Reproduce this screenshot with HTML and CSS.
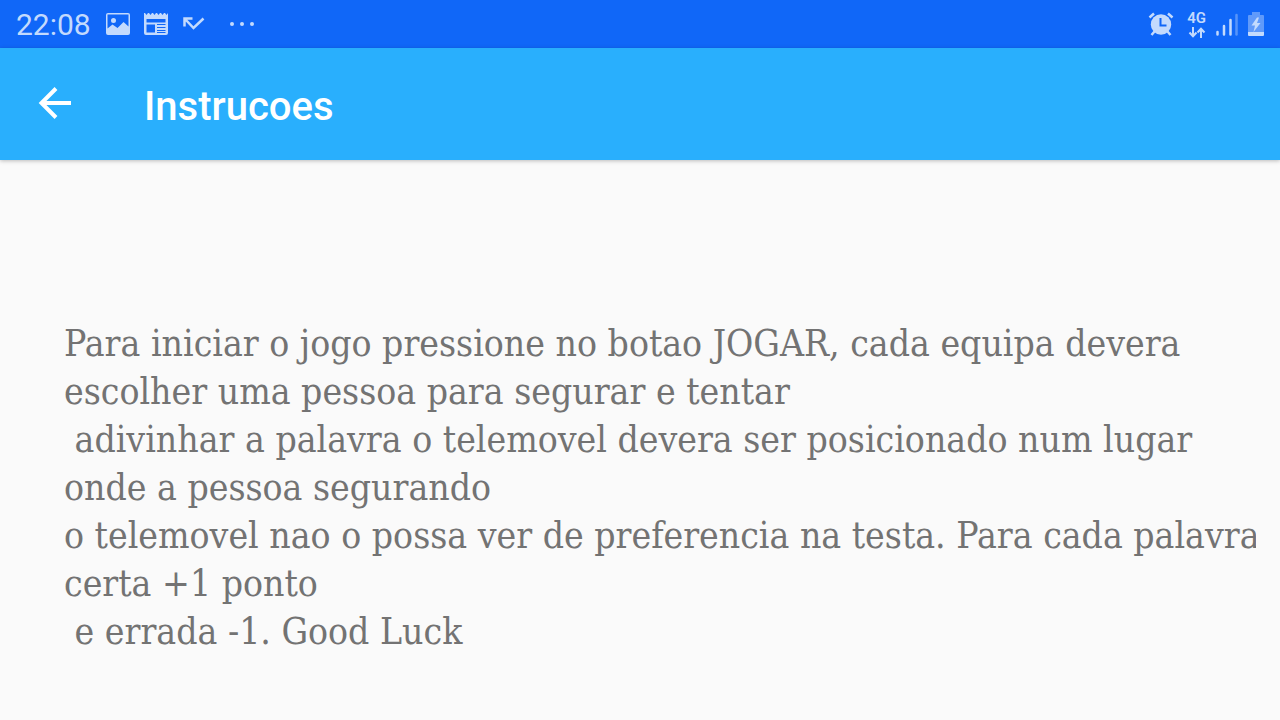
FILE: index.html
```html
<!DOCTYPE html>
<html lang="pt">
<head>
<meta charset="utf-8">
<meta name="viewport" content="width=device-width, initial-scale=1">
<title>Instrucoes</title>
<link rel="stylesheet" href="styles.css">
</head>
<body>
<div class="status-bar">
  <div class="status-group">
    <time class="clock">22:08</time>
    <svg class="icon-picture" width="24" height="22" viewBox="0 0 24 22" fill="currentColor" aria-hidden="true">
      <path fill-rule="evenodd" d="M2 0h20a2 2 0 0 1 2 2v18a2 2 0 0 1-2 2H2a2 2 0 0 1-2-2V2a2 2 0 0 1 2-2zM1.500 1.500v14l5-4 5 3.500 6-6 5 4.500v-12zM7.500 5a2.500 2.500 0 1 1 0 5 2.500 2.500 0 0 1 0-5z"/>
    </svg>
    <svg class="icon-news" width="24" height="22" viewBox="0 0 24 22" aria-hidden="true">
      <path fill="currentColor" fill-rule="evenodd" d="M0 0h1l1.500 2L4 0h1l1.500 2L8 0h1l1.500 2L12 0h1l1.500 2L16 0h1l1.500 2L20 0h1l1.500 2L24 0v20a2 2 0 0 1-2 2H2a2 2 0 0 1-2-2zM2.500 6v3.500h19V6zM2.500 11.500v8h8.500v-8zM13 11v1h8.500v-1zM13 14v1h8.500v-1zM13 17v1h8.500v-1zM13 19v1h8.500v-1z"/>
    </svg>
    <svg class="icon-missed" width="22" height="14" viewBox="0 0 22 14" fill="none" stroke="currentColor" stroke-width="2.500" aria-hidden="true">
      <path d="M1.500 9.500V1.500H9.500M2 2l8.500 9L20.500 1.500"/>
    </svg>
    <svg class="icon-more" width="24" height="4" viewBox="0 0 24 4" fill="currentColor" aria-hidden="true">
      <circle cx="2" cy="2" r="2"/><circle cx="12" cy="2" r="2"/><circle cx="22" cy="2" r="2"/>
    </svg>
  </div>
  <div class="status-group status-right">
    <svg class="icon-alarm" width="26" height="24" viewBox="0 0 26 24" aria-hidden="true">
      <g fill="none" stroke="currentColor" stroke-width="2.500"><path d="M1.500 5.500 6 1.500M20 1.500l4.500 4M6.500 19.500 3.500 23M19.500 19.500l3 3.500"/></g>
      <circle cx="13" cy="12.500" r="10.200" fill="currentColor"/>
      <path class="alarm-hand" d="M12.500 6v7.500h6"/>
    </svg>
    <div class="network">
      <span>4G</span>
      <svg width="18" height="11" viewBox="0 0 18 11" fill="none" stroke="currentColor" stroke-width="2" aria-hidden="true">
        <path d="M5 0v9M1.500 5.500 5 9.300l3.500-3.800M13 11V2M9.500 5.500 13 1.700l3.500 3.800"/>
      </svg>
    </div>
    <svg class="icon-signal" width="22" height="23" viewBox="0 0 22 23" fill="none" stroke="currentColor" stroke-width="2.500" stroke-linecap="round" aria-hidden="true">
      <path d="M1.500 21.500v-2.500M8 21.500V13M14.500 21.500V7"/><path opacity=".4" d="M20.500 21.500V2"/>
    </svg>
    <svg class="icon-battery" width="16" height="24" viewBox="0 0 16 24" fill="currentColor" aria-hidden="true">
      <path opacity=".45" d="M4 0h8v3h3a1 1 0 0 1 1 1v16H0V4a1 1 0 0 1 1-1h3z"/>
      <path d="M0 20h16v3a1 1 0 0 1-1 1H1a1 1 0 0 1-1-1zM9 5.500 3.500 13.500H7L5.500 20 12.500 11H9l2-5.500z"/>
    </svg>
  </div>
</div>
<header class="app-bar">
  <button class="back" type="button" aria-label="Voltar">
    <svg width="34" height="34" viewBox="0 0 34 34" fill="none" stroke="currentColor" stroke-width="4" aria-hidden="true">
      <path d="M34 16H5M19 1.500 4.500 16 19 30.500"/>
    </svg>
  </button>
  <h1 class="title">Instrucoes</h1>
</header>
<main class="content">
  <p class="instructions">Para iniciar o jogo pressione no botao JOGAR, cada equipa devera
escolher uma pessoa para segurar e tentar
 adivinhar a palavra o telemovel devera ser posicionado num lugar
onde a pessoa segurando
o telemovel nao o possa ver de preferencia na testa. Para cada palavra
certa +1 ponto
 e errada -1. Good Luck</p>
</main>
</body>
</html>
```
FILE: styles.css
```css
* { box-sizing: border-box; }
body {
  margin: 0;
  min-height: 100vh;
  display: flex;
  flex-direction: column;
  background: #fafafa;
  font-family: Roboto, sans-serif;
}
.status-bar {
  display: flex;
  justify-content: space-between;
  height: 48px;
  padding: 0 16px;
  background: #1067f8;
  color: #c3dafd;
}
.status-group { display: flex; align-items: center; }
.clock { font-size: 30px; line-height: 40px; padding-top: 2px; margin-right: 15px; }
.icon-picture { margin-right: 14px; }
.icon-news { margin-right: 15px; }
.icon-missed { margin-right: 25px; }
.icon-alarm { margin-right: 3px; }
.status-right { gap: 10px; }
.alarm-hand { fill: none; stroke: #1067f8; stroke-width: 2; }
.network {
  display: flex;
  flex-direction: column;
  align-items: center;
  font-size: 15px;
  font-weight: 600;
  line-height: 16px;
}
.network svg { margin-top: 1px; }
.app-bar {
  display: flex;
  align-items: center;
  height: 112px;
  padding-left: 32px;
  background: #29affd;
  color: #fff;
  box-shadow: 0 1px 4px rgba(0, 0, 0, .25);
}
.back {
  display: flex;
  padding: 5px;
  margin-right: 68px;
  border: 0;
  background: none;
  color: inherit;
}
.title { margin: 6px 0 0; font-size: 40px; font-weight: 500; line-height: 48px; }
.content {
  flex: 1;
  display: flex;
  flex-direction: column;
  justify-content: center;
  padding: 96px 24px 0 64px;
}
.instructions {
  margin: 0;
  overflow: hidden;
  color: #737373;
  font-family: "Roboto Slab", "DejaVu Serif Condensed", "DejaVu Serif", serif;
  font-size: 37px;
  line-height: 48px;
  white-space: pre;
}
```
